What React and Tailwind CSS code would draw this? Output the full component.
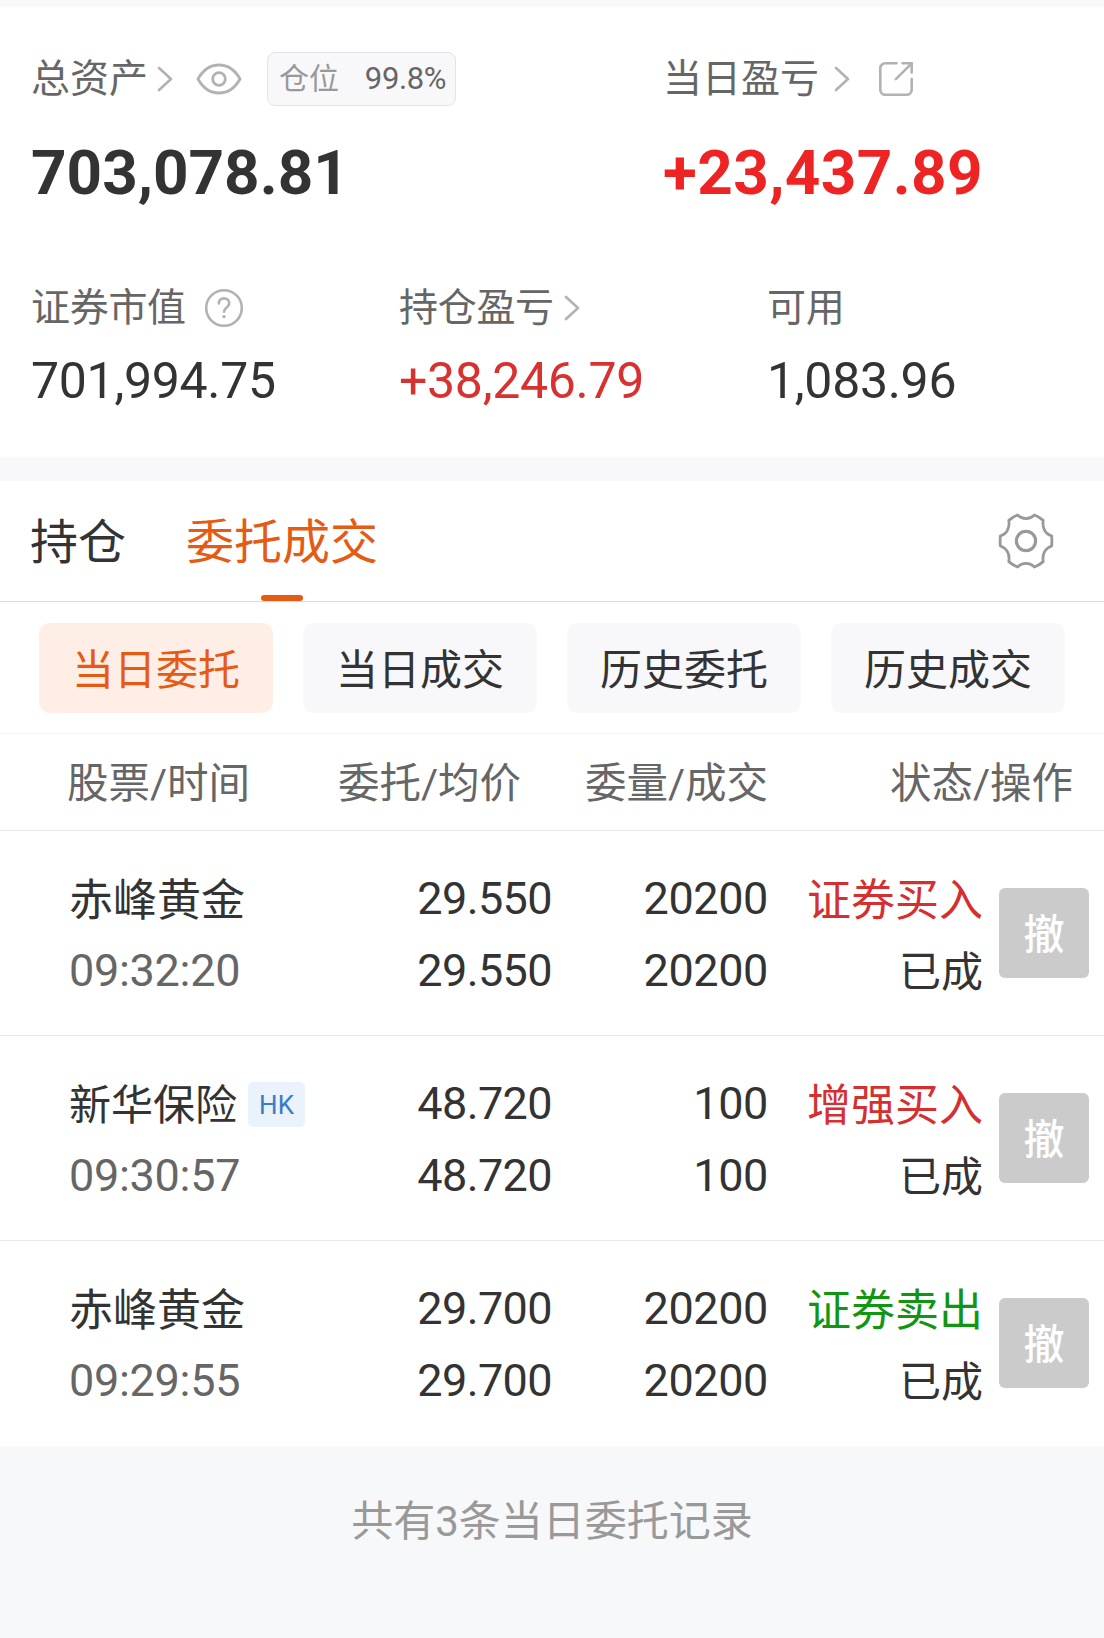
import React from 'react';

const orders = [
  { name: '赤峰黄金', time: '09:32:20', price: '29.550', avg: '29.550', amount: '20200', done: '20200', side: '证券买入', sideColor: 'text-[#d62f2f]', status: '已成' },
  { name: '新华保险', tag: 'HK', time: '09:30:57', price: '48.720', avg: '48.720', amount: '100', done: '100', side: '增强买入', sideColor: 'text-[#d62f2f]', status: '已成' },
  { name: '赤峰黄金', time: '09:29:55', price: '29.700', avg: '29.700', amount: '20200', done: '20200', side: '证券卖出', sideColor: 'text-[#119611]', status: '已成' },
];

const filters = ['当日委托', '当日成交', '历史委托', '历史成交'];

const Chevron = ({ className }) => (
  <svg className={className} width="16" height="26" viewBox="0 0 16 26" fill="none" stroke="#b2b2b2" strokeWidth="2.6" strokeLinecap="round" strokeLinejoin="round">
    <path d="M2 2l12 11L2 24" />
  </svg>
);

const EyeIcon = ({ className }) => (
  <svg className={className} width="46" height="32" viewBox="0 0 46 32" fill="none" stroke="#b2b2b2" strokeWidth="2.8" strokeLinejoin="round">
    <path d="M2 16C7 7 14 2 23 2s16 5 21 14c-5 9-12 14-21 14S7 25 2 16z" />
    <circle cx="23" cy="16" r="6.3" />
  </svg>
);

const ShareIcon = ({ className }) => (
  <svg className={className} width="36" height="36" viewBox="0 0 36 36" fill="none" stroke="#b2b2b2" strokeWidth="2.6" strokeLinecap="round">
    <path d="M18.5 2.3H7.3a5 5 0 0 0-5 5v21.4a5 5 0 0 0 5 5h21.4a5 5 0 0 0 5-5V18" />
    <path d="M24.5 2.3h9.2v9.2M33.2 2.8L17.8 18.2" />
  </svg>
);

const HelpIcon = ({ className }) => (
  <svg className={className} width="40" height="40" viewBox="0 0 40 40" fill="none" stroke="#b2b2b2" strokeWidth="2.6" strokeLinecap="round">
    <circle cx="20" cy="20" r="17.8" />
    <path d="M14.8 15.4c0-3 2.2-5 5.2-5s5.2 2 5.2 4.8c0 4.2-5.2 4.2-5.2 8.6" />
    <circle cx="20" cy="28.6" r="1.7" fill="#b2b2b2" stroke="none" />
  </svg>
);

const GearIcon = () => (
  <svg width="56" height="56" viewBox="-28 -28 56 56" fill="none" stroke="#999" strokeWidth="2.8" strokeLinejoin="round">
    <path d="M-8.5 -26C-3.5 -21.2 3.5 -21.2 8.5 -26Q13.2 -24.2 17.2 -20.6C16 -13 19.3 -7.2 25.7 -5Q26 0 25.7 5C19.3 7.2 16 13 17.2 20.6Q13.2 24.2 8.5 26C3.5 21.2 -3.5 21.2 -8.5 26Q-13.2 24.2 -17.2 20.6C-16 13 -19.3 7.2 -25.7 5Q-26 0 -25.7 -5C-19.3 -7.2 -16 -13 -17.2 -20.6Q-13.2 -24.2 -8.5 -26z" />
    <circle r="9.6" strokeWidth="3.2" />
  </svg>
);

const Summary = () => (
  <section className="bg-white h-[450px] pt-[45px]">
    <div className="flex pl-[31px]">
      <div className="w-[632px]">
        <div className="flex items-center h-[54px]">
          <span className="text-[39px] leading-[54px] text-[#666]">总资产</span>
          <Chevron className="ml-[9px]" />
          <EyeIcon className="ml-[23px]" />
          <div className="ml-[25px] flex items-center justify-between w-[189px] h-[54px] pl-[11px] pr-[9px] rounded-lg border border-[#e4e4e6] bg-[#f8f8fb] leading-[50px]">
            <span className="text-[30px] text-[#999]">仓位</span>
            <span className="text-[31px] tracking-[-0.4px] text-[#666]">99.8%</span>
          </div>
        </div>
        <div className="mt-[31px] text-[62px] leading-[72px] font-bold text-[#333]">703,078.81</div>
      </div>
      <div>
        <div className="flex items-center h-[54px]">
          <span className="text-[39px] leading-[54px] text-[#666]">当日盈亏</span>
          <Chevron className="ml-[15px]" />
          <ShareIcon className="ml-[28px]" />
        </div>
        <div className="mt-[31px] text-[62px] leading-[72px] tracking-[0.4px] font-bold text-[#ee2424]">+23,437.89</div>
      </div>
    </div>
    <div className="grid grid-cols-3 pl-[31px] w-[1135px] mt-[72px]">
      <div>
        <div className="flex items-center h-[54px] text-[39px] tracking-[-0.3px] text-[#666]">
          证券市值
          <HelpIcon className="ml-[18px]" />
        </div>
        <div className="mt-[16px] text-[50px] leading-[60px] tracking-[-0.3px] text-[#333]">701,994.75</div>
      </div>
      <div>
        <div className="flex items-center h-[54px] text-[39px] tracking-[-0.3px] text-[#666]">
          持仓盈亏
          <Chevron className="ml-[10px]" />
        </div>
        <div className="mt-[16px] text-[50px] leading-[60px] tracking-[-0.3px] text-[#d93030]">+38,246.79</div>
      </div>
      <div>
        <div className="flex items-center h-[54px] text-[39px] tracking-[-0.3px] text-[#666]">可用</div>
        <div className="mt-[16px] text-[50px] leading-[60px] tracking-[-0.3px] text-[#333]">1,083.96</div>
      </div>
    </div>
  </section>
);

const Tabs = () => (
  <nav className="bg-white flex items-center h-[121px] pl-[30px] pr-[50px] border-b border-[#dcdcdc] text-[48px]">
    <span className="pt-[4px] text-[#333]">持仓</span>
    <span className="relative ml-[60px] h-full flex items-center pt-[4px] text-[#e65b14]">
      委托成交
      <i className="absolute bottom-0 left-1/2 -ml-[21px] w-[42px] h-[6px] rounded-full bg-[#e65b14]" />
    </span>
    <span className="ml-auto">
      <GearIcon />
    </span>
  </nav>
);

const OrderRow = ({ order }) => (
  <div className="grid grid-cols-[552px_216px_215px_1fr] h-[205px] pt-[32px] border-b border-[#ebebeb] last:border-0 text-[45px] leading-[72px] text-[#333]">
    <div className="flex">
      <div className="flex-1 pl-[69px]">
        <div className="flex items-center h-[72px]">
          <span className={order.tag ? 'pt-[3px] text-[42px]' : 'pt-[3px] text-[44px]'}>{order.name}</span>
          {order.tag && (
            <span className="ml-[11px] w-[57px] h-[45px] rounded-[5px] bg-[#eaf2fb] text-center text-[26px] leading-[46px] text-[#3c7bc6]">{order.tag}</span>
          )}
        </div>
        <div className="tracking-[-0.3px] text-[#666]">{order.time}</div>
      </div>
      <div className="text-right tracking-[-0.6px]">
        <div>{order.price}</div>
        <div>{order.avg}</div>
      </div>
    </div>
    <div className="text-right tracking-[-0.4px]">
      <div>{order.amount}</div>
      <div>{order.done}</div>
    </div>
    <div className="text-right pt-[2px]">
      <div className={`text-[44px] ${order.sideColor}`}>{order.side}</div>
      <div className="text-[42px]">{order.status}</div>
    </div>
    <button className="ml-[16px] mt-[25px] w-[90px] h-[90px] pt-[4px] rounded-md bg-[#cbcbcb] text-white text-[41px] font-medium leading-[86px]">撤</button>
  </div>
);

export default function App() {
  return (
    <div className="w-[1104px] h-[1638px] overflow-hidden bg-[#f7f8fa] font-[Roboto,'Noto_Sans_CJK_SC',sans-serif]">
      <div className="h-[7px] bg-[#f8f8fb]" />
      <Summary />
      <div className="h-6 bg-[#f8f8fb]" />
      <Tabs />
      <div className="bg-white flex gap-[30px] h-[132px] pt-[21px] pl-[39px] border-b border-[#f5f5f5]">
        {filters.map((text, i) => (
          <button
            key={text}
            className={`w-[234px] h-[90px] pt-[4px] rounded-[11px] text-[42px] ${i === 0 ? 'bg-[#ffeee6] text-[#e65b14]' : 'bg-[#f8f8fb] text-[#333]'}`}
          >
            {text}
          </button>
        ))}
      </div>
      <div className="bg-white flex h-[97px] items-center pt-[5px] pl-[67px] pr-[31px] border-b border-[#ebebeb] text-[41.5px] text-[#666]">
        <span className="w-[271px]">股票/时间</span>
        <span className="w-[247px]">委托/均价</span>
        <span>委量/成交</span>
        <span className="ml-auto">状态/操作</span>
      </div>
      <div className="bg-white">
        {orders.map((order) => (
          <OrderRow key={order.time} order={order} />
        ))}
      </div>
      <div className="pt-[46px] text-center text-[42px] leading-[60px] text-[#999]">共有3条当日委托记录</div>
    </div>
  );
}
